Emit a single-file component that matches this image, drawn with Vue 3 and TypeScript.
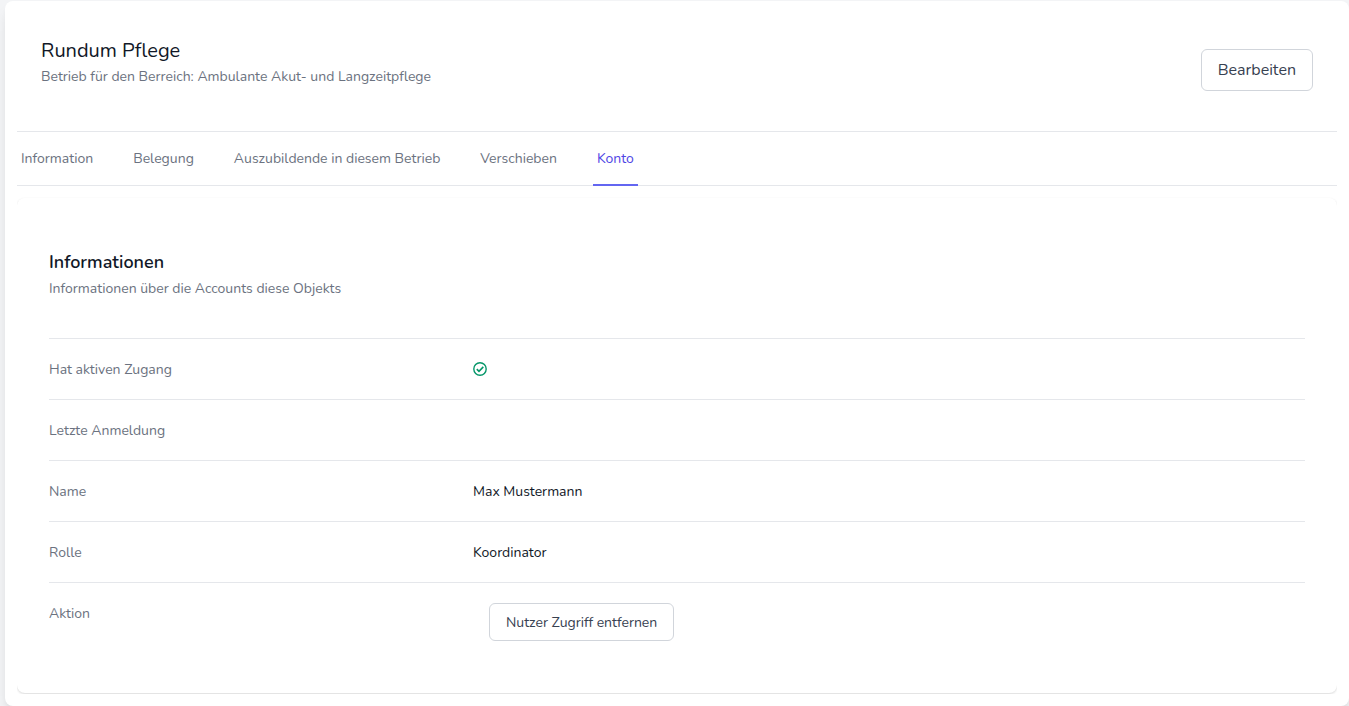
<script setup lang="ts">
import { ref } from 'vue'

const tabs: string[] = ['Information', 'Belegung', 'Auszubildende in diesem Betrieb', 'Verschieben', 'Konto']
const active = ref('Konto')

interface Row { label: string; kind: 'check' | 'text' | 'action'; value: string }
const rows: Row[] = [
  { label: 'Hat aktiven Zugang', kind: 'check', value: '' },
  { label: 'Letzte Anmeldung', kind: 'text', value: '' },
  { label: 'Name', kind: 'text', value: 'Max Mustermann' },
  { label: 'Rolle', kind: 'text', value: 'Koordinator' },
  { label: 'Aktion', kind: 'action', value: 'Nutzer Zugriff entfernen' },
]
</script>

<template>
  <main class="page">
    <article class="card">
      <header class="head">
        <div class="title">
          <h1>Rundum Pflege</h1>
          <p>Betrieb für den Berreich: Ambulante Akut- und Langzeitpflege</p>
        </div>
        <button type="button" class="btn large">Bearbeiten</button>
      </header>
      <nav class="tabs">
        <a v-for="t in tabs" :key="t" href="#" :class="{ active: t === active }" @click.prevent="active = t">{{ t }}</a>
      </nav>
      <section class="panel">
        <h2>Informationen</h2>
        <p>Informationen über die Accounts diese Objekts</p>
        <dl>
          <div v-for="r in rows" :key="r.label" class="row">
            <dt>{{ r.label }}</dt>
            <dd :class="r.kind">
              <svg v-if="r.kind === 'check'" viewBox="0 0 14 14" fill="none" stroke="currentColor" role="img" aria-label="Ja">
                <circle cx="7" cy="7" r="6.2" stroke-width="1.4" />
                <path d="M3.8 7.1l2.2 2.2 4.3-4.4" stroke-width="1.6" />
              </svg>
              <button v-else-if="r.kind === 'action'" type="button" class="btn">{{ r.value }}</button>
              <template v-else>{{ r.value }}</template>
            </dd>
          </div>
        </dl>
      </section>
    </article>
  </main>
</template>

<style>
body { background: #f3f4f6; }
</style>

<style scoped>
* { box-sizing: border-box; }
.page { font-family: Nunito, "Open Sans", "Noto Sans", sans-serif; font-size: 14px; line-height: 22px; color: #6b7280; padding: 1px 0 0 5px; }
h1, h2, p, dl, dd { margin: 0; }
.card { background: #fff; border-radius: 8px; padding: 0 12px 13px; box-shadow: 0 10px 15px -3px rgba(0, 0, 0, .1), 0 4px 6px -2px rgba(0, 0, 0, .05); }
.head { display: flex; justify-content: space-between; align-items: flex-end; gap: 16px; padding: 36px 24px 40px; min-height: 130px; }
.title { align-self: flex-start; }
h1 { font-size: 20px; line-height: 28px; font-weight: 400; color: #111827; }
.head p { margin-top: 1px; }
.btn { font: inherit; color: #374151; background: #fff; border: 1px solid #d1d5db; border-radius: 6px; padding: 8px 16px 6px; white-space: nowrap; cursor: pointer; }
.large { font-size: 16px; line-height: 24px; padding: 8px 16px; }
.tabs { display: flex; gap: 32px; border-top: 1px solid #e5e7eb; border-bottom: 1px solid #e5e7eb; }
.tabs a { color: inherit; text-decoration: none; padding: 16px 4px 14px; border-bottom: 2px solid transparent; margin-bottom: -1px; white-space: nowrap; }
.tabs .active { color: #4f46e5; border-color: #6366f1; }
.panel { margin-top: 12px; padding: 50px 32px 32px; border-radius: 8px; box-shadow: 0 1px 3px rgba(0, 0, 0, .1), 0 1px 2px rgba(0, 0, 0, .06); clip-path: inset(-1px 0); }
h2 { font-size: 18px; line-height: 28px; font-weight: 600; color: #111827; }
.panel p { margin-top: 2px; }
dl { margin: 38px 0 0; }
.row { display: grid; grid-template-columns: 1fr 2fr; gap: 8px; border-top: 1px solid #e5e7eb; padding: 20px 0 18px; }
.row:last-child { padding-bottom: 20px; }
dd { color: #111827; }
dd svg { width: 14px; height: 14px; color: #059669; display: block; margin-top: 3px; }
.action { padding-left: 16px; }
</style>
